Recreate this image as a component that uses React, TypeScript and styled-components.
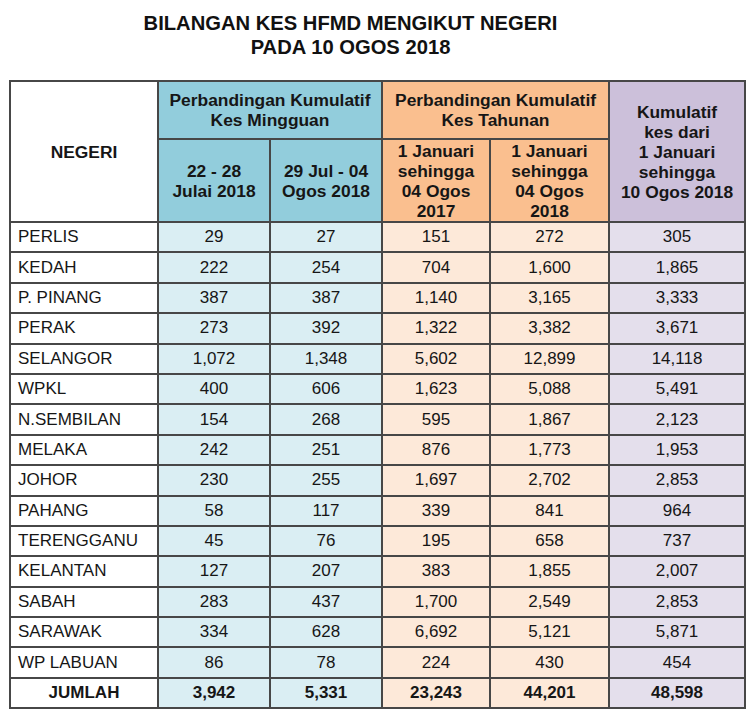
import React from "react";
import styled, { createGlobalStyle, css } from "styled-components";

const Global = createGlobalStyle`
  html, body { margin: 0; padding: 0; background: #ffffff; }
  body { font-family: "Liberation Sans", Arial, sans-serif; color: #161616; }
`;

type Tone = "white" | "blue" | "orange" | "purple";

const headTones: Record<Tone, string> = {
  white: "#ffffff",
  blue: "#92cddc",
  orange: "#fabf8f",
  purple: "#ccc0da",
};

const bodyTones: Record<Tone, string> = {
  white: "#ffffff",
  blue: "#daeef3",
  orange: "#fde9d9",
  purple: "#e4dfec",
};

const Page = styled.div`
  width: 750px;
  padding-top: 11px;
`;

const Title = styled.h1`
  margin: 0 0 21px 0;
  width: 701px;
  text-align: center;
  font-size: 20.2px;
  line-height: 24px;
  font-weight: 700;
  color: #111111;
`;

const Table = styled.table`
  margin-left: 9px;
  width: 735px;
  border-collapse: collapse;
  table-layout: fixed;
  border: 2px solid #6a6a6a;
`;

const cellBase = css`
  border: 2px solid #474747;
  padding: 0;
  font-size: 17px;
  color: #161616;
`;

const HeadCell = styled.th<{ $tone: Tone }>`
  ${cellBase}
  background: ${(p) => headTones[p.$tone]};
  font-size: 17.4px;
  font-weight: 700;
  text-align: center;
  vertical-align: middle;
  line-height: 20px;
`;

const TopHeadRow = styled.tr`
  height: 58px;
`;

const SubHeadRow = styled.tr`
  height: 83px;
`;

const BodyRow = styled.tr`
  height: 30.4px;
`;

const NameCell = styled.td<{ $total?: boolean }>`
  ${cellBase}
  background: #ffffff;
  text-align: ${(p) => (p.$total ? "center" : "left")};
  padding-left: ${(p) => (p.$total ? "0" : "7px")};
  font-weight: ${(p) => (p.$total ? 700 : 400)};
`;

const NumCell = styled.td<{ $tone: Tone; $total?: boolean }>`
  ${cellBase}
  background: ${(p) => bodyTones[p.$tone]};
  text-align: center;
  font-weight: ${(p) => (p.$total ? 700 : 400)};
`;

const rows: [string, string, string, string, string, string][] = [
  ["PERLIS", "29", "27", "151", "272", "305"],
  ["KEDAH", "222", "254", "704", "1,600", "1,865"],
  ["P. PINANG", "387", "387", "1,140", "3,165", "3,333"],
  ["PERAK", "273", "392", "1,322", "3,382", "3,671"],
  ["SELANGOR", "1,072", "1,348", "5,602", "12,899", "14,118"],
  ["WPKL", "400", "606", "1,623", "5,088", "5,491"],
  ["N.SEMBILAN", "154", "268", "595", "1,867", "2,123"],
  ["MELAKA", "242", "251", "876", "1,773", "1,953"],
  ["JOHOR", "230", "255", "1,697", "2,702", "2,853"],
  ["PAHANG", "58", "117", "339", "841", "964"],
  ["TERENGGANU", "45", "76", "195", "658", "737"],
  ["KELANTAN", "127", "207", "383", "1,855", "2,007"],
  ["SABAH", "283", "437", "1,700", "2,549", "2,853"],
  ["SARAWAK", "334", "628", "6,692", "5,121", "5,871"],
  ["WP LABUAN", "86", "78", "224", "430", "454"],
];

const total: [string, string, string, string, string, string] = [
  "JUMLAH", "3,942", "5,331", "23,243", "44,201", "48,598",
];

const tones: Tone[] = ["blue", "blue", "orange", "orange", "purple"];

const widths = [148, 112, 112, 108, 119, 136];

export default function App() {
  return (
    <Page>
      <Global />
      <Title>
        BILANGAN KES HFMD MENGIKUT NEGERI
        <br />
        PADA 10 OGOS 2018
      </Title>
      <Table>
        <colgroup>
          {widths.map((w, i) => (
            <col key={i} style={{ width: w }} />
          ))}
        </colgroup>
        <thead>
          <TopHeadRow>
            <HeadCell $tone="white" rowSpan={2}>NEGERI</HeadCell>
            <HeadCell $tone="blue" colSpan={2}>
              Perbandingan Kumulatif
              <br />
              Kes Mingguan
            </HeadCell>
            <HeadCell $tone="orange" colSpan={2}>
              Perbandingan Kumulatif
              <br />
              Kes Tahunan
            </HeadCell>
            <HeadCell $tone="purple" rowSpan={2}>
              Kumulatif
              <br />
              kes dari
              <br />
              1 Januari
              <br />
              sehingga
              <br />
              10 Ogos 2018
            </HeadCell>
          </TopHeadRow>
          <SubHeadRow>
            <HeadCell $tone="blue">
              22 - 28
              <br />
              Julai 2018
            </HeadCell>
            <HeadCell $tone="blue">
              29 Jul - 04
              <br />
              Ogos 2018
            </HeadCell>
            <HeadCell $tone="orange">
              1 Januari
              <br />
              sehingga
              <br />
              04 Ogos
              <br />
              2017
            </HeadCell>
            <HeadCell $tone="orange">
              1 Januari
              <br />
              sehingga
              <br />
              04 Ogos
              <br />
              2018
            </HeadCell>
          </SubHeadRow>
        </thead>
        <tbody>
          {rows.map((r) => (
            <BodyRow key={r[0]}>
              <NameCell>{r[0]}</NameCell>
              {r.slice(1).map((v, i) => (
                <NumCell key={i} $tone={tones[i]}>{v}</NumCell>
              ))}
            </BodyRow>
          ))}
          <BodyRow>
            <NameCell $total>{total[0]}</NameCell>
            {total.slice(1).map((v, i) => (
              <NumCell key={i} $tone={tones[i]} $total>{v}</NumCell>
            ))}
          </BodyRow>
        </tbody>
      </Table>
    </Page>
  );
}
